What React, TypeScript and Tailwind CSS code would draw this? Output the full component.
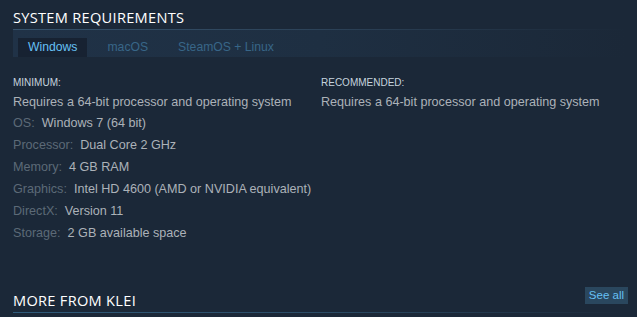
import React from "react";

const rows: [string, string][] = [
  ["OS:", "Windows 7 (64 bit)"],
  ["Processor:", "Dual Core 2 GHz"],
  ["Memory:", "4 GB RAM"],
  ["Graphics:", "Intel HD 4600 (AMD or NVIDIA equivalent)"],
  ["DirectX:", "Version 11"],
  ["Storage:", "2 GB available space"],
];

export default function App() {
  return (
    <div className="w-[637px] h-[317px] overflow-hidden bg-[#1b2838] pl-[13px] pr-[11px] flex flex-col" style={{ fontFamily: "Arial, 'Liberation Sans', sans-serif" }}>
      <div className="pt-[8px] h-[29px] text-[14.6px] leading-[18px] tracking-[0.02em] text-white uppercase" style={{ fontFamily: "'Open Sans', 'Noto Sans', sans-serif" }}>
        System Requirements
      </div>
      <div className="h-px bg-gradient-to-r from-[#36526b] via-[#2c4258] to-transparent" />
      <div className="h-[27px] bg-gradient-to-r from-[#203247] via-[#1e2f42] to-[#1b2838] flex items-end pl-[5px] gap-[10px] text-[12.2px]">
        <div className="h-[19px] px-[10px] bg-[#172232] text-[#66c0f4] flex items-center">Windows</div>
        <div className="h-[19px] px-[10px] text-[#386688] flex items-center">macOS</div>
        <div className="h-[19px] px-[10px] text-[#386688] flex items-center">SteamOS + Linux</div>
      </div>
      <div className="flex pt-[20px]">
        <div className="w-[308px] flex flex-col whitespace-nowrap">
          <div className="text-[10px] leading-[12px] text-[#c6d4df] h-[12px]">MINIMUM:</div>
          <div className="text-[12.6px] leading-[19px] text-[#acb2b8] mt-[4px]">Requires a 64-bit processor and operating system</div>
          {rows.map(([k, v]) => (
            <div key={k} className="text-[12.6px] leading-[22px] flex gap-[7px]">
              <span className="text-[#5c6a77]">{k}</span>
              <span className="text-[#acb2b8]">{v}</span>
            </div>
          ))}
        </div>
        <div className="flex flex-col whitespace-nowrap">
          <div className="text-[10px] leading-[12px] text-[#c6d4df] h-[12px]">RECOMMENDED:</div>
          <div className="text-[12.6px] leading-[19px] text-[#acb2b8] mt-[4px]">Requires a 64-bit processor and operating system</div>
        </div>
      </div>
      <div className="mt-auto flex items-end justify-between">
        <div className="text-[14.6px] leading-[18px] text-white uppercase tracking-[0.02em] pb-[3px]" style={{ fontFamily: "'Open Sans', 'Noto Sans', sans-serif" }}>More from Klei</div>
        <div className="mb-[8px] -mr-[2px] h-[17px] px-[4px] bg-[#2a475e] text-[#66c0f4] text-[11.5px] leading-[17px]">See all</div>
      </div>
      <div className="h-px mb-[4px] bg-gradient-to-r from-[#2f5b7b] via-[#2b4c66] to-transparent" />
    </div>
  );
}
